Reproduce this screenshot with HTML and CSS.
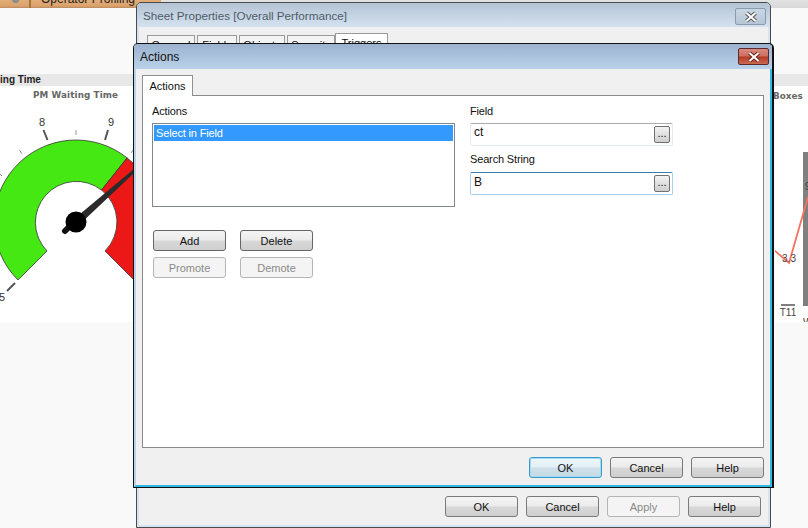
FILE: index.html
```html
<!DOCTYPE html>
<html lang="en">
<head>
<meta charset="utf-8">
<title>Actions</title>
<link rel="stylesheet" href="styles.css">
</head>
<body>
<div class="desktop">
  <div class="topbar">
    <div class="toptab first"><i class="tabicon"></i></div>
    <div class="toptab"><span class="tabtext">Operator Profiling</span></div>
  </div>

  <section class="sheetobj gauge-obj">
    <div class="caption cap-left">ing Time</div>
    <div class="chart">
      <div class="chart-title">PM Waiting Time</div>
      <svg class="chart-svg" width="133" height="236" viewBox="0 86 133 236">
        <path d="M18 280A82 82 0 0 1 127.100 157.900L101.560 190.050A41 41 0 0 0 47 251Z" fill="#46e813" stroke="#333" stroke-width=".8"/>
        <path d="M127.100 157.900A82 82 0 0 1 134 280L105 251A41 41 0 0 0 101.560 190.050Z" fill="#ec1818" stroke="#333" stroke-width=".8"/>
        <g stroke="#555" stroke-linecap="butt">
          <path d="M43.500 130L47.500 140M108 130L105 140M7 291L15 283" stroke-width="2"/>
          <path d="M76 130V135M19.500 150L22 154M133 150L131 153M0 174L2 176" stroke-width="1" stroke="#999"/>
        </g>
        <g class="gauge-num">
          <text x="42" y="126" text-anchor="middle">8</text>
          <text x="111" y="126" text-anchor="middle">9</text>
          <text x="2" y="301" text-anchor="middle">5</text>
        </g>
        <path d="M134 169L135 172L79 225L74 219Z" fill="#2b2b2b"/>
        <path d="M75 221L65 231" stroke="#111" stroke-width="6" stroke-linecap="round"/>
        <circle cx="76" cy="222" r="10.500" fill="#000"/>
      </svg>
    </div>
  </section>

  <section class="sheetobj line-obj">
    <div class="caption cap-right">Boxes</div>
    <svg class="chart-svg" width="33" height="236" viewBox="775 86 33 236">
      <rect x="803" y="152" width="5" height="154" fill="#808080"/>
      <rect x="781" y="304" width="14" height="2" fill="#808080"/>
      <path d="M774 250L789 263L808 197" fill="none" stroke="#f9705f" stroke-width="1.800"/>
      <g class="line-num">
        <text x="789" y="262" text-anchor="middle">3.3</text>
        <text x="788" y="316" text-anchor="middle">T11</text>
        <text x="803" y="326">W</text>
        <text x="805" y="190">9</text>
      </g>
    </svg>
  </section>

  <div class="window back">
    <header class="titlebar inactive">
      <span class="title">Sheet Properties [Overall Performance]</span>
      <button class="close gray" aria-label="Close">
        <svg width="14" height="12" viewBox="0 0 14 12"><path d="M2.500 2L11.500 10M11.500 2L2.500 10" stroke="#555" stroke-width="4"/><path d="M2.500 2L11.500 10M11.500 2L2.500 10" stroke="#fff" stroke-width="2"/></svg>
      </button>
    </header>
    <div class="body">
      <div class="back-tabs">
        <span class="btab w48">General</span>
        <span class="btab w40">Fields</span>
        <span class="btab w46">Objects</span>
        <span class="btab w48">Security</span>
        <span class="btab w53 current">Triggers</span>
      </div>
      <div class="footer back-footer">
        <button class="btn">OK</button>
        <button class="btn">Cancel</button>
        <button class="btn disabled">Apply</button>
        <button class="btn">Help</button>
      </div>
    </div>
  </div>

  <div class="window front">
    <header class="titlebar active">
      <span class="title dark">Actions</span>
      <button class="close red" aria-label="Close">
        <svg width="14" height="12" viewBox="0 0 14 12"><path d="M2.500 2L11.500 10M11.500 2L2.500 10" stroke="#6d2018" stroke-width="4"/><path d="M2.500 2L11.500 10M11.500 2L2.500 10" stroke="#fff" stroke-width="2"/></svg>
      </button>
    </header>
    <div class="body front-body">
      <div class="tabrow"><span class="tab">Actions</span></div>
      <div class="panel">
        <div class="left-col">
          <label class="lbl">Actions</label>
          <div class="listbox"><div class="item selected">Select in Field</div></div>
          <div class="btn-grid">
            <button class="btn dark-edge">Add</button>
            <button class="btn dark-edge">Delete</button>
            <button class="btn disabled">Promote</button>
            <button class="btn disabled">Demote</button>
          </div>
        </div>
        <div class="right-col">
          <label class="lbl">Field</label>
          <div class="input"><span class="val">ct</span><button class="dots">...</button></div>
          <label class="lbl second">Search String</label>
          <div class="input focused"><span class="val">B</span><button class="dots">...</button></div>
        </div>
      </div>
      <div class="footer front-footer">
        <button class="btn default">OK</button>
        <button class="btn">Cancel</button>
        <button class="btn">Help</button>
      </div>
    </div>
  </div>
</div>
</body>
</html>
```
FILE: styles.css
```css
* { box-sizing: border-box; }
html, body { margin: 0; padding: 0; }
body { font-family: "Liberation Sans", Arial, sans-serif; font-size: 11px; color: #111; }
.desktop { position: relative; width: 808px; height: 528px; overflow: hidden; background: #f9f9f9; }

.topbar { display: flex; height: 8px; background: linear-gradient(#e2e2e2, #d8d8d8); }
.toptab { height: 8px; width: 132px; overflow: hidden; background: linear-gradient(#e2ad78 0, #dba26c 75%, #b9895c 100%); border-left: 2px solid #a5743f; padding-left: 10px; line-height: 0; font-size: 12px; color: #222; white-space: nowrap; }
.toptab.first { width: 29px; border-left: 0; padding-left: 12px; }
.tabicon { display: block; width: 7px; height: 3px; background: #8d8d8d; border-radius: 0 0 3px 3px; }
.tabtext { display: block; margin-top: -1px; }

.sheetobj { position: absolute; top: 74px; }
.gauge-obj { left: 0; width: 134px; }
.line-obj { left: 773px; width: 35px; }
.caption { height: 12px; background: #e8e8e8; font: bold 10px/12px "Liberation Sans", sans-serif; color: #222; white-space: nowrap; overflow: hidden; }
.cap-right { color: #666; font: bold 8.800px/44px "DejaVu Sans", sans-serif; overflow: visible; }
.chart { position: relative; height: 236px; background: #fff; overflow: hidden; }
.line-obj .chart-svg { margin-left: 2px; background: #fff; }
.chart-svg { display: block; }
.chart-title { position: absolute; top: 3px; left: 33px; font: bold 8.800px/13px "DejaVu Sans", sans-serif; color: #666; letter-spacing: .1px; white-space: nowrap; }
.gauge-num text { font: 11px "Liberation Sans", sans-serif; fill: #333; }
.line-num text { font: 10px "Liberation Sans", sans-serif; fill: #444; }

.window { position: absolute; display: flex; flex-direction: column; border-radius: 5px 5px 0 0; }
.back { left: 136px; top: 2px; width: 635px; height: 526px; border: 1px solid #4a4a4a; }
.front { left: 133px; top: 43px; width: 641px; height: 445px; border: 1px solid #111; border-right-width: 2px; }

.titlebar { flex: none; display: flex; align-items: flex-start; justify-content: space-between; border-radius: 4px 4px 0 0; }
.inactive { height: 24px; padding: 5px 4px 0 6px; background: linear-gradient(#b4c3d4, #d4e2f0); }
.active { height: 25px; padding: 6px 3px 0 6px; background: linear-gradient(#9bb3cf, #b9d1e9); }
.title { font-size: 11.700px; line-height: 15px; color: #4e5b68; }
.title.dark { font-size: 12px; color: #111; }
.close { display: flex; align-items: center; justify-content: center; padding: 0; border-radius: 2px; }
.close.gray { width: 31px; height: 17px; border: 1px solid #8a9cb0; background: linear-gradient(#c9d6e4, #b7c6d6); }
.close.red { width: 31px; height: 17px; margin-top: -2px; border: 1px solid #5c2a2a; background: linear-gradient(#d98a80 0, #cf6d60 48%, #b23a22 52%, #cb6a55 100%); }

.body { flex: 1; display: flex; flex-direction: column; background: #f0f0f0; border: solid #d6e3f0; border-width: 0 2px 2px; min-height: 0; }
.front-body { border-color: #b9d3ea #2fb8e6 #2fb8e6 #b9d3ea; padding: 6px 8px 0 6px; }
.back-tabs { display: flex; align-items: flex-end; height: 16px; padding: 0 0 0 8px; margin-top: 6px; gap: 2px; }
.btab { height: 14px; border: 1px solid #9a9a9a; border-bottom: 0; background: #f4f4f4; padding: 3px 0 0; text-align: center; }
.btab.current { height: 16px; margin-left: -2px; background: #fff; }
.w48 { width: 48px; } .w40 { width: 40px; } .w46 { width: 46px; } .w53 { width: 53px; }
.footer { display: flex; justify-content: flex-end; gap: 8px; }
.back-footer { margin-top: auto; padding: 0 7px 8px 0; }
.front-footer { padding-top: 9px; margin-right: -2px; }

.tabrow { display: flex; height: 20px; flex: none; }
.tab { width: 51px; height: 21px; border: 1px solid #8f8f8f; border-bottom: 0; background: #fff; text-align: center; line-height: 20px; position: relative; z-index: 1; font-size: 11px; }
.panel { flex: none; display: flex; gap: 15px; width: 622px; height: 353px; padding: 8px 0 0 9px; background: #fff; border: 1px solid #8a8a8a; }
.left-col { width: 303px; }
.right-col { width: 203px; }
.lbl { display: block; height: 14px; line-height: 14px; margin-bottom: 5px; letter-spacing: -.15px; }
.lbl.second { margin: 6px 0 6px; }
.listbox { height: 84px; padding: 1px; border: 1px solid #828790; background: #fff; }
.item { height: 16px; line-height: 16px; padding-left: 2px; letter-spacing: -.15px; }
.selected { background: #3399ff; color: #fff; }
.btn-grid { display: grid; grid-template-columns: 73px 73px; column-gap: 14px; row-gap: 6px; margin: 23px 0 0 1px; }

.btn { width: 73px; height: 21px; padding: 0; font: 11px "Liberation Sans", Arial, sans-serif; color: #111; border: 1px solid #7a7a7a; border-radius: 3px; background: linear-gradient(#f4f4f4 0, #ebebeb 48%, #d8d8d8 52%, #cfcfcf 100%); }
.btn.dark-edge { border-color: #666; }
.btn.disabled { color: #8a8a8a; border-color: #b5b5b5; background: #f4f4f4; }
.btn.default { border-color: #3c9ac9; box-shadow: inset 0 0 0 1px #9fdcf5; background: linear-gradient(#eef6fb 0, #e3eff6 48%, #cfe0ea 52%, #c6d9e4 100%); }

.input { display: flex; align-items: center; justify-content: space-between; height: 23px; padding: 0 2px 0 3px; border: 1px solid #e3e9ef; border-top-color: #ababab; border-radius: 2px; background: #fff; font-size: 12px; }
.input.focused { border-color: #a8d0ea; border-top-color: #3d7bad; }
.val { margin-top: -5px; }
.input.focused .val { margin-top: -3px; }
.dots { width: 16px; height: 17px; padding: 0 0 3px; font: 11px/12px "Liberation Sans", sans-serif; color: #111; border: 1px solid #707070; border-radius: 2px; background: linear-gradient(#f2f2f2, #cfcfcf); }
```
